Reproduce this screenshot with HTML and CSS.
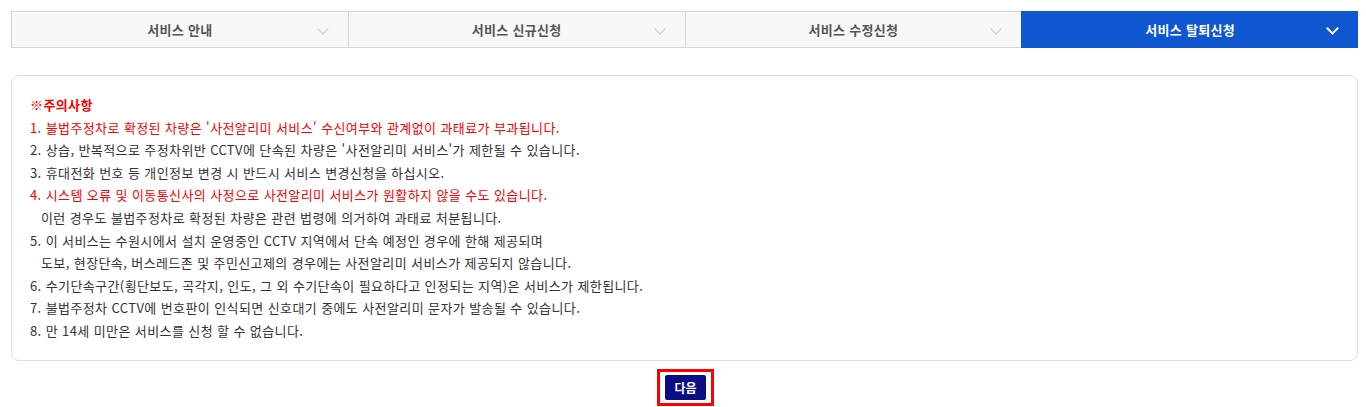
FILE: index.html
```html
<!DOCTYPE html>
<html lang="ko">
<head>
  <meta charset="UTF-8">
  <title>사전알리미 서비스 탈퇴신청</title>
  <link rel="stylesheet" href="styles.css">
</head>
<body>
  <ul class="tabs">
    <li class="tab">서비스 안내<span class="chevron"></span></li>
    <li class="tab">서비스 신규신청<span class="chevron"></span></li>
    <li class="tab">서비스 수정신청<span class="chevron"></span></li>
    <li class="tab active">서비스 탈퇴신청<span class="chevron"></span></li>
  </ul>

  <div class="notice">
    <p class="red title">※주의사항</p>
    <p class="red">1. 불법주정차로 확정된 차량은 '사전알리미 서비스' 수신여부와 관계없이 과태료가 부과됩니다.</p>
    <p>2. 상습, 반복적으로 주정차위반 CCTV에 단속된 차량은 '사전알리미 서비스'가 제한될 수 있습니다.</p>
    <p>3. 휴대전화 번호 등 개인정보 변경 시 반드시 서비스 변경신청을 하십시오.</p>
    <p class="red">4. 시스템 오류 및 이동통신사의 사정으로 사전알리미 서비스가 원활하지 않을 수도 있습니다.</p>
    <p class="indent">이런 경우도 불법주정차로 확정된 차량은 관련 법령에 의거하여 과태료 처분됩니다.</p>
    <p>5. 이 서비스는 수원시에서 설치 운영중인 CCTV 지역에서 단속 예정인 경우에 한해 제공되며</p>
    <p class="indent">도보, 현장단속, 버스레드존 및 주민신고제의 경우에는 사전알리미 서비스가 제공되지 않습니다.</p>
    <p>6. 수기단속구간(횡단보도, 곡각지, 인도, 그 외 수기단속이 필요하다고 인정되는 지역)은 서비스가 제한됩니다.</p>
    <p>7. 불법주정차 CCTV에 번호판이 인식되면 신호대기 중에도 사전알리미 문자가 발송될 수 있습니다.</p>
    <p>8. 만 14세 미만은 서비스를 신청 할 수 없습니다.</p>
  </div>

  <div class="actions">
    <span class="focus-ring"><button class="btn-next" type="button">다음</button></span>
  </div>
</body>
</html>
```

FILE: styles.css
```css
body {
  margin: 0;
  padding: 11px 8px 0 11px;
  font-family: "Noto Sans CJK KR", "Noto Sans", sans-serif;
  font-size: 13px;
  color: #333;
  background: #fff;
}

.tabs {
  display: flex;
  margin: 0;
  padding: 0;
  list-style: none;
  border: 1px solid #d6d6d6;
  background: #f8f8f8;
}

.tab {
  position: relative;
  flex: 1;
  height: 35px;
  line-height: 35px;
  text-align: center;
  font-weight: 700;
  font-size: 13px;
  letter-spacing: 0.3px;
  color: #555;
  border-left: 1px solid #d6d6d6;
}

.tab:first-child {
  border-left: none;
}

.tab.active {
  background: #0f57d0;
  color: #fff;
  margin: -1px -1px -1px 0;
  height: 37px;
  line-height: 37px;
  border-left-color: #0f57d0;
}

/* small down arrow on the right of each tab */
.chevron {
  position: absolute;
  right: 21px;
  top: 13px;
  width: 7px;
  height: 7px;
  border: solid #ccc;
  border-width: 0 1px 1px 0;
  transform: rotate(45deg);
}

.tab.active .chevron {
  border-color: #fff;
  border-width: 0 2px 2px 0;
  right: 21px;
  top: 13px;
}

.notice {
  margin-top: 27px;
  padding: 18px 18px 17px 18px;
  border: 1px solid #ddd;
  border-radius: 8px;
}

.notice p {
  margin: 0;
  line-height: 22.6px;
  letter-spacing: 0.4px;
}

.notice .red {
  color: #f00;
}

.notice .title {
  font-weight: 700;
}

.notice .indent {
  padding-left: 11px;
}

.actions {
  display: flex;
  justify-content: center;
  margin-top: 8px;
  padding-left: 2px;
}

.focus-ring {
  display: inline-block;
  border: 3px solid #f00;
  padding: 3px 5px;
}

.btn-next {
  display: block;
  width: 41px;
  height: 25px;
  padding: 0;
  border: none;
  border-radius: 2px;
  background: #0c0c85;
  color: #fff;
  font-family: inherit;
  font-size: 12px;
  font-weight: 700;
  cursor: pointer;
}
```
